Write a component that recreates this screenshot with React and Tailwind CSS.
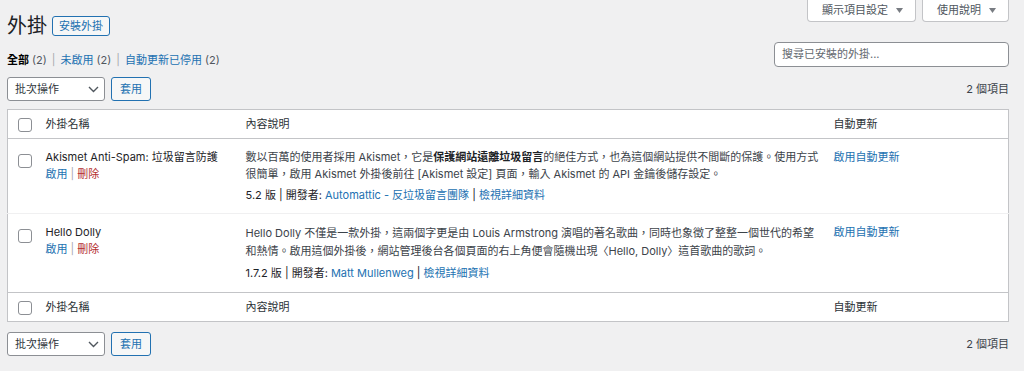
import React from "react";

const font = { fontFamily: 'Inter, "Noto Sans CJK TC", sans-serif' };

const Check = () => (
  <span className="inline-block w-[14px] h-[14px] rounded-[3px] border border-[#8c8f94] bg-white align-middle" />
);

const Caret = () => (
  <svg width="7" height="5" viewBox="0 0 7 5" className="inline-block ml-[8px]">
    <path d="M0 0h7L3.5 5z" fill="#787c82" />
  </svg>
);

const Bulk = () => (
  <div className="flex items-center gap-[6px]">
    <div className="w-[98px] h-[24px] bg-white border border-[#8c8f94] rounded-[3px] flex items-center justify-between pl-[7px] pr-[5px] text-[11px] text-[#2c3338]">
      <span>批次操作</span>
      <svg width="11" height="7" viewBox="0 0 11 7">
        <path d="M1 1l4.5 4.5L10 1" fill="none" stroke="#50575e" strokeWidth="1.4" />
      </svg>
    </div>
    <button className="h-[24px] w-[40px] border border-[#2271b1] rounded-[3px] bg-[#f6f7f7] text-[#2271b1] text-[11px]">
      套用
    </button>
  </div>
);

const HeadRow = ({ top }) => (
  <tr className={top ? "border-b border-[#c3c4c7]" : "border-t border-[#c3c4c7]"}>
    <td className="pl-[10px] h-[29px] align-middle leading-none">
      <Check />
    </td>
    <td className="pl-[8px] text-[11px] text-[#2c3338] align-middle">外掛名稱</td>
    <td className="pl-[8px] text-[11px] text-[#2c3338] align-middle">內容說明</td>
    <td className="pl-[8px] text-[11px] text-[#2c3338] align-middle">自動更新</td>
  </tr>
);

const PluginRow = ({ name, desc, version, author, last, h, gap, lh }) => (
  <tr className={last ? "" : "border-b border-[#f0f0f1]"}>
    <td className={`pl-[10px] pt-[12px] align-top leading-none ${h}`}>
      <Check />
    </td>
    <td className="pl-[8px] pt-[10px] align-top">
      <div className="text-[11px] leading-[17px] text-[#1d2327]">{name}</div>
      <div className="text-[11px] leading-[17px]">
        <span className="text-[#2271b1]">啟用</span>
        <span className="text-[#a7aaad] mx-[3px]">|</span>
        <span className="text-[#b32d2e]">刪除</span>
      </div>
    </td>
    <td className={`pl-[8px] pr-[2px] pt-[10px] align-top text-[11px] ${lh} text-[#3c434a]`}>
      <div>{desc}</div>
      <div className={`${gap} leading-[17px] text-[#1d2327]`}>
        {version} 版 | 開發者: <span className="text-[#2271b1]">{author}</span> | <span className="text-[#2271b1]">檢視詳細資料</span>
      </div>
    </td>
    <td className="pl-[8px] pt-[10px] align-top text-[11px] leading-[17px] text-[#2271b1]">啟用自動更新</td>
  </tr>
);

const Tab = ({ children }) => (
  <div className="h-[22px] pl-[14px] pr-[12px] bg-white border border-t-0 border-[#c3c4c7] rounded-b-[4px] flex items-center text-[11px] text-[#50575e]">
    {children}
    <Caret />
  </div>
);

export default function App() {
  return (
    <div style={font} className="w-[1024px] h-[371px] bg-[#f0f0f1] overflow-hidden pl-[7px] pr-[15px]">
      <div className="flex justify-between items-start">
        <div className="flex items-center pt-[16px] h-[36px]">
          <h1 className="text-[20px] leading-[20px] text-[#1d2327]">外掛</h1>
          <span className="ml-[5px] h-[20px] px-[6px] border border-[#2271b1] rounded-[3px] bg-[#f6f7f7] text-[#2271b1] text-[11px] leading-[18px]">
            安裝外掛
          </span>
        </div>
        <div className="flex gap-[6px]">
          <Tab>顯示項目設定</Tab>
          <Tab>使用說明</Tab>
        </div>
      </div>

      <div className="flex items-start justify-between mt-[6px]">
        <div className="text-[11px] leading-[17px] text-[#50575e] pt-[10px]">
          <span className="font-semibold text-black">全部</span> (2)
          <span className="text-[#a7aaad] mx-[5px]">|</span>
          <span className="text-[#2271b1]">未啟用</span> (2)
          <span className="text-[#a7aaad] mx-[5px]">|</span>
          <span className="text-[#2271b1]">自動更新已停用</span> (2)
        </div>
        <div className="w-[235px] h-[25px] bg-white border border-[#8c8f94] rounded-[4px] flex items-center px-[7px] text-[11px] text-[#646970]">
          搜尋已安裝的外掛...
        </div>
      </div>

      <div className="flex items-center justify-between mt-[8px] h-[24px]">
        <Bulk />
        <span className="text-[11px] text-[#3c434a]">2 個項目</span>
      </div>

      <table className="w-full mt-[8px] bg-white border border-[#c3c4c7] border-collapse table-fixed">
        <colgroup>
          <col className="w-[30px]" />
          <col className="w-[200px]" />
          <col className="w-[588px]" />
          <col />
        </colgroup>
        <tbody>
          <HeadRow top />
          <PluginRow
            h="h-[75px]"
            gap="mt-[4px]"
            lh="leading-[17px]"
            name="Akismet Anti-Spam: 垃圾留言防護"
            desc={
              <>
                數以百萬的使用者採用 Akismet，它是<span className="font-semibold text-[#1d2327]">保護網站遠離垃圾留言</span>的絕佳方式，也為這個網站提供不間斷的保護。使用方式很簡單，啟用 Akismet 外掛後前往 [Akismet 設定] 頁面，輸入 Akismet 的 API 金鑰後儲存設定。
              </>
            }
            version="5.2"
            author="Automattic - 反垃圾留言團隊"
          />
          <PluginRow
            h="h-[79px]"
            gap="mt-[5px]"
            lh="leading-[18px]"
            name="Hello Dolly"
            desc="Hello Dolly 不僅是一款外掛，這兩個字更是由 Louis Armstrong 演唱的著名歌曲，同時也象徵了整整一個世代的希望和熱情。啟用這個外掛後，網站管理後台各個頁面的右上角便會隨機出現〈Hello, Dolly〉這首歌曲的歌詞。"
            version="1.7.2"
            author="Matt Mullenweg"
            last
          />
          <HeadRow />
        </tbody>
      </table>

      <div className="flex items-center justify-between mt-[10px] h-[24px]">
        <Bulk />
        <span className="text-[11px] text-[#3c434a]">2 個項目</span>
      </div>
    </div>
  );
}
